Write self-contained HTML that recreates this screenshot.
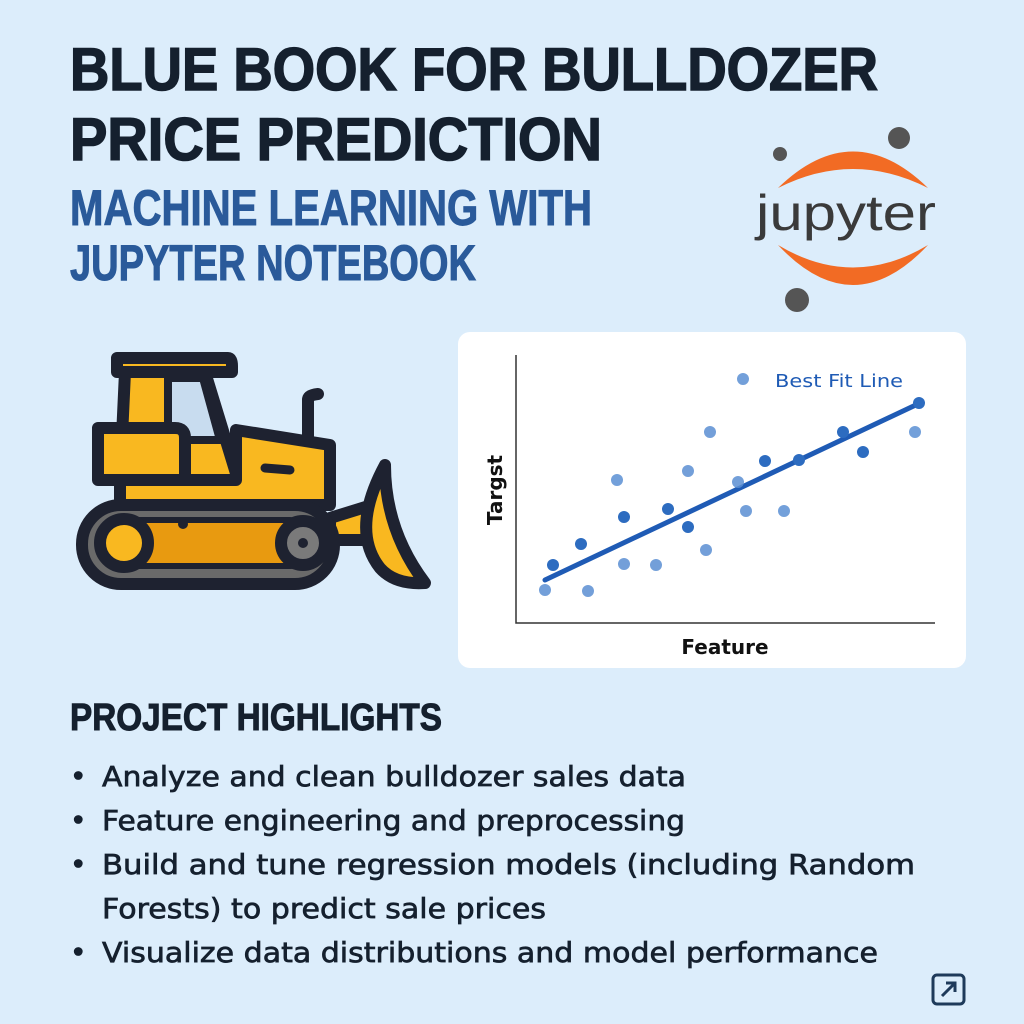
<!DOCTYPE html>
<html><head><meta charset="utf-8"><style>
html,body{margin:0;padding:0;background:#dcedfb;}
svg{display:block}
</style></head><body>
<svg width="1024" height="1024" viewBox="0 0 1024 1024" xmlns="http://www.w3.org/2000/svg">
<rect width="1024" height="1024" fill="#dcedfb"/>
<g font-family="Liberation Sans, sans-serif" font-weight="bold" stroke-width="1.5">
<text x="70" y="90" font-size="60" fill="#15202e" stroke="#15202e" textLength="808" lengthAdjust="spacingAndGlyphs">BLUE BOOK FOR BULLDOZER</text>
<text x="70" y="160" font-size="60" fill="#15202e" stroke="#15202e" textLength="532" lengthAdjust="spacingAndGlyphs">PRICE PREDICTION</text>
<text x="70" y="225" font-size="50" fill="#2a5a9a" stroke="#2a5a9a" stroke-width="1" textLength="522" lengthAdjust="spacingAndGlyphs">MACHINE LEARNING WITH</text>
<text x="70" y="280" font-size="50" fill="#2a5a9a" stroke="#2a5a9a" stroke-width="1" textLength="406" lengthAdjust="spacingAndGlyphs">JUPYTER NOTEBOOK</text>
<text x="70" y="730" font-size="38" fill="#15202e" stroke="#15202e" stroke-width="1" textLength="372" lengthAdjust="spacingAndGlyphs">PROJECT HIGHLIGHTS</text>
</g>
<!-- jupyter logo -->
<path d="M778 188 Q853 115 928 188 Q853 150 778 188Z" fill="#f26b24"/>
<path d="M778 245 Q853 325 928 245 Q853 290 778 245Z" fill="#f26b24"/>
<circle cx="780" cy="154" r="7" fill="#555"/>
<circle cx="899" cy="138" r="11" fill="#555"/>
<circle cx="797" cy="300" r="12" fill="#555"/>
<text x="756" y="230" font-family="Liberation Sans, sans-serif" font-size="50" fill="#3a3a3a" textLength="180" lengthAdjust="spacingAndGlyphs">jupyter</text>
<!-- bulldozer -->
<g stroke="#1e2230" stroke-width="12" stroke-linejoin="round" stroke-linecap="round">
<path d="M117 358 L228 358 Q232 358 232 366 L232 372 L117 372Z" fill="#f9b820"/>
<path d="M125 372 L205 372 L238 480 L120 480Z" fill="#f9b820"/>
<path d="M168 378 L203 378 L220 440 L168 440Z" fill="#c8dcef" stroke-width="8"/>
<path d="M98 428 L175 428 Q185 428 185 438 L185 480 L98 480Z" fill="#f9b820"/>
<path d="M236 430 L330 445 L330 505 L120 505 L120 480 L236 480Z" fill="#f9b820"/>
<path d="M308 400 L308 440" fill="none"/>
<path d="M308 400 Q308 395 318 394" fill="none"/>
<path d="M265 468 L290 470" stroke-width="9"/>
<path d="M330 518 L372 505 L372 540 L330 540Z" fill="#f9b820"/>
<path d="M385 465 Q350 530 380 568 Q395 585 425 583 Q385 530 385 465Z" fill="#f9b820"/>
<rect x="82" y="505" width="252" height="79" rx="39" fill="#6a6a6a"/>
<rect x="115" y="520" width="185" height="46" rx="10" fill="#e89a10" stroke-width="6"/>
<circle cx="124" cy="543" r="24" fill="#f9b820"/>
<circle cx="303" cy="543" r="22" fill="#7a7a7a"/>
</g>
<circle cx="303" cy="543" r="5" fill="#1e2230"/>
<circle cx="183" cy="524" r="5" fill="#1e2230"/>
<!-- chart card -->
<rect x="458" y="332" width="508" height="336" rx="12" fill="#fff"/>
<path d="M516 355 L516 623 L935 623" stroke="#333" stroke-width="1.5" fill="none"/>
<line x1="545" y1="580" x2="920" y2="403" stroke="#1f5bb5" stroke-width="5" stroke-linecap="round"/>
<g fill="#2d6cc0">
<circle cx="553" cy="565" r="6"/><circle cx="581" cy="544" r="6"/><circle cx="624" cy="517" r="6"/><circle cx="668" cy="509" r="6"/><circle cx="688" cy="527" r="6"/><circle cx="765" cy="461" r="6"/><circle cx="799" cy="460" r="6"/><circle cx="843" cy="432" r="6"/><circle cx="863" cy="452" r="6"/><circle cx="919" cy="403" r="6"/>
</g>
<g fill="#5b8fd3" opacity="0.85">
<circle cx="545" cy="590" r="6"/><circle cx="588" cy="591" r="6"/><circle cx="617" cy="480" r="6"/><circle cx="624" cy="564" r="6"/><circle cx="656" cy="565" r="6"/><circle cx="688" cy="471" r="6"/><circle cx="706" cy="550" r="6"/><circle cx="710" cy="432" r="6"/><circle cx="738" cy="482" r="6"/><circle cx="746" cy="511" r="6"/><circle cx="784" cy="511" r="6"/><circle cx="915" cy="432" r="6"/><circle cx="743" cy="379" r="6"/>
</g>
<text x="775" y="387" font-family="DejaVu Sans, sans-serif" font-size="18" fill="#1f5bb5" textLength="128" lengthAdjust="spacingAndGlyphs">Best Fit Line</text>
<text x="725" y="654" text-anchor="middle" font-family="DejaVu Sans, sans-serif" font-weight="bold" font-size="20" fill="#111">Feature</text>
<text transform="translate(502,490) rotate(-90)" text-anchor="middle" font-family="DejaVu Sans, sans-serif" font-weight="bold" font-size="20" fill="#111">Targst</text>
<!-- bullets -->
<g font-family="DejaVu Sans, sans-serif" font-size="28" fill="#15202e" stroke="#15202e" stroke-width="0.7">
<text x="70" y="786">•</text><text x="102" y="786" textLength="584" lengthAdjust="spacingAndGlyphs">Analyze and clean bulldozer sales data</text>
<text x="70" y="830">•</text><text x="102" y="830" textLength="583" lengthAdjust="spacingAndGlyphs">Feature engineering and preprocessing</text>
<text x="70" y="874">•</text><text x="102" y="874" textLength="813" lengthAdjust="spacingAndGlyphs">Build and tune regression models (including Random</text>
<text x="102" y="918" textLength="444" lengthAdjust="spacingAndGlyphs">Forests) to predict sale prices</text>
<text x="70" y="962">•</text><text x="102" y="962" textLength="776" lengthAdjust="spacingAndGlyphs">Visualize data distributions and model performance</text>
</g>
<rect x="933" y="975" width="31" height="29" rx="4" fill="none" stroke="#1e3a5a" stroke-width="3"/>
<path d="M942 996 L955 983 M946 983 L955 983 L955 992" stroke="#1e3a5a" stroke-width="3" fill="none"/>
</svg>
</body></html>
